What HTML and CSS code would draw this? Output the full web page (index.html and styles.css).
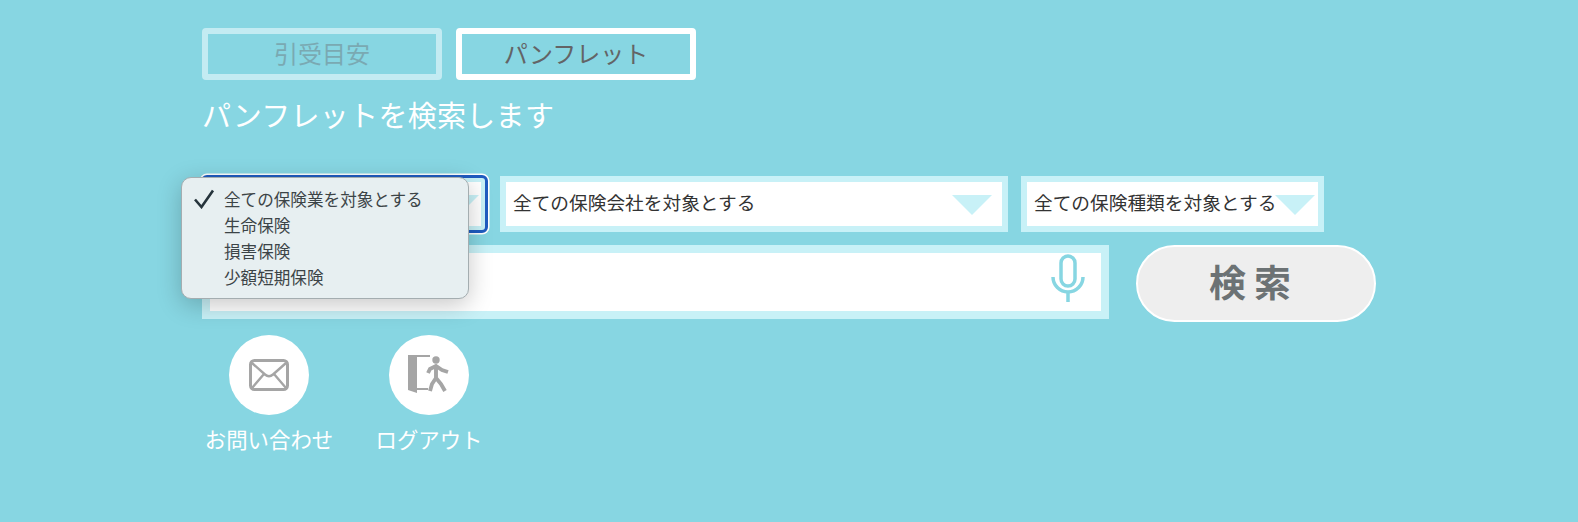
FILE: index.html
```html
<!DOCTYPE html>
<html lang="ja">
<head>
  <meta charset="UTF-8">
  <title>パンフレット検索</title>
  <meta name="viewport" content="width=device-width, initial-scale=1.0">
  <link rel="stylesheet" href="styles.css">
</head>
<body>
  <div class="search-page">
    <div class="tab-row">
      <div class="tab tab-off">引受目安</div>
      <div class="tab tab-on">パンフレット</div>
    </div>
    <div class="page-title">パンフレットを検索します</div>

    <div class="select-row">
      <div class="select-box select-industry is-focus">
        <span class="select-arrow"></span>
        <div class="select-menu">
          <div class="menu-item">
            <svg class="menu-check" viewBox="0 0 22 20"><path d="M2 10.5 L8.5 18 L20 1.5" fill="none" stroke="#26343c" stroke-width="2.6"/></svg>
            全ての保険業を対象とする
          </div>
          <div class="menu-item">生命保険</div>
          <div class="menu-item">損害保険</div>
          <div class="menu-item">少額短期保険</div>
        </div>
      </div>
      <div class="select-box select-company">全ての保険会社を対象とする<span class="select-arrow"></span></div>
      <div class="select-box select-kind">全ての保険種類を対象とする<span class="select-arrow"></span></div>
    </div>

    <div class="query-row">
      <div class="query-box">
        <svg class="mic-icon" viewBox="0 0 34 48">
          <rect x="10" y="2" width="14" height="30" rx="7" fill="none" stroke="#87d6e2" stroke-width="3.5"/>
          <path d="M2 23 A15 15 0 0 0 32 23 M17 38 V48" fill="none" stroke="#87d6e2" stroke-width="3.5"/>
        </svg>
      </div>
      <div class="search-btn">検索</div>
    </div>

    <div class="link-row">
      <div class="round-link">
        <div class="round-icon">
          <svg class="mail-icon" viewBox="0 0 40 32">
            <rect x="1.5" y="1.5" width="37" height="29" rx="4" fill="none" stroke="#a5a5a5" stroke-width="3"/>
            <path d="M3 4 L16 15.500 Q20 19 24 15.500 L37 4 M3 29 L15 15 M37 29 L25 15" fill="none" stroke="#a5a5a5" stroke-width="2.4"/>
          </svg>
        </div>
        <div class="round-label">お問い合わせ</div>
      </div>
      <div class="round-link">
        <div class="round-icon">
          <svg class="exit-icon" viewBox="0 0 42 40">
            <path d="M0 0 H22 V2 H9 V33 H20 V35 H9 V38 L0 35 Z" fill="#a5a5a5"/>
            <circle cx="28" cy="5" r="3.7" fill="#a5a5a5"/>
            <path d="M20 18 L22 14 L28 11 L34 15 L40 17 M28 11 V23 M28 23 L24 29 L22 36 M28 23 L33 29 L37 36" fill="none" stroke="#a5a5a5" stroke-width="3.9"/>
          </svg>
        </div>
        <div class="round-label">ログアウト</div>
      </div>
    </div>
  </div>
</body>
</html>
```

FILE: styles.css
```css
html, body {
  height: 100%;
  margin: 0;
  background: #87d6e2;
  font-family: "Noto Sans CJK JP", "Noto Sans", sans-serif;
}
.search-page {
  padding: 28px 0 0 202px;
  display: flex;
  flex-direction: column;
  align-items: flex-start;
}
.tab-row {
  display: flex;
  gap: 14px;
}
.tab {
  width: 240px;
  height: 52px;
  box-sizing: border-box;
  border: 6px solid #fff;
  border-radius: 4px;
  padding-bottom: 4px;
  font-size: 24px;
  font-weight: 400;
  display: flex;
  align-items: center;
  justify-content: center;
}
.tab-off {
  border-color: #c3ebf2;
  color: #7aa9b2;
}
.tab-on {
  color: #636466;
}
.page-title {
  margin-top: 14px;
  font-size: 29px;
  letter-spacing: 0.3px;
  line-height: 40px;
  font-weight: 400;
  color: #fff;
}
.select-row {
  margin-top: 42px;
  display: flex;
  gap: 14px;
}
.select-box {
  position: relative;
  height: 56px;
  box-sizing: border-box;
  border: 6px solid #c8f1f7;
  background: #fff;
  padding: 0 0 5px 7px;
  display: flex;
  align-items: center;
  font-size: 18.700px;
  font-weight: 400;
  color: #333;
  white-space: nowrap;
}
.select-industry { width: 285px; margin-right: -1px; }
.select-company { width: 508px; }
.select-kind { width: 303px; margin-left: -1px; }
.select-arrow {
  position: absolute;
  right: 10px;
  top: 13px;
  width: 0;
  height: 0;
  border-left: 20px solid transparent;
  border-right: 20px solid transparent;
  border-top: 20px solid #c8f1f7;
}
.select-industry .select-arrow {
  right: 2px;
}
.select-kind .select-arrow {
  right: 3px;
}
.is-focus {
  outline: 3px solid #1f5cc0;
  outline-offset: -2px;
  border-radius: 5px;
  box-shadow: 0 0 0 2.5px #fff;
}
.select-menu {
  position: absolute;
  left: -27px;
  top: -5px;
  z-index: 5;
  width: 288px;
  height: 122px;
  box-sizing: border-box;
  padding: 8px 0 0 42px;
  background: #e7eff1;
  border: 1px solid #a4adb0;
  border-radius: 10px;
  box-shadow: 0 6px 24px rgba(0, 0, 0, 0.22);
}
.menu-item {
  position: relative;
  height: 26px;
  line-height: 26px;
  font-size: 16.600px;
  font-weight: 400;
  color: #3c4447;
}
.menu-check {
  position: absolute;
  left: -31px;
  top: 3px;
  width: 22px;
  height: 20px;
}
.query-row {
  margin-top: 13px;
  display: flex;
  gap: 27px;
}
.query-box {
  width: 907px;
  height: 74px;
  box-sizing: border-box;
  border: 8px solid #c8f1f7;
  background: #fff;
  display: flex;
  align-items: center;
  justify-content: flex-end;
  padding: 0 16px 8px 0;
}
.mic-icon {
  width: 34px;
  height: 48px;
}
.search-btn {
  width: 240px;
  height: 77px;
  box-sizing: border-box;
  border: 2px solid #fff;
  border-radius: 39px;
  background: #eee;
  color: #6c7274;
  font-size: 37px;
  font-weight: 700;
  letter-spacing: 8px;
  padding: 0 4px 6px 0;
  display: flex;
  align-items: center;
  justify-content: center;
}
.link-row {
  margin: 13px 0 0 -13px;
  display: flex;
}
.round-link {
  width: 160px;
  display: flex;
  flex-direction: column;
  align-items: center;
}
.round-icon {
  width: 80px;
  height: 80px;
  border-radius: 50%;
  background: #fff;
  display: flex;
  align-items: center;
  justify-content: center;
}
.mail-icon {
  width: 40px;
  height: 32px;
}
.exit-icon {
  width: 42px;
  height: 40px;
}
.round-label {
  margin-top: 9px;
  font-size: 21.400px;
  line-height: 30px;
  color: #fff;
  font-weight: 400;
  white-space: nowrap;
}
```
